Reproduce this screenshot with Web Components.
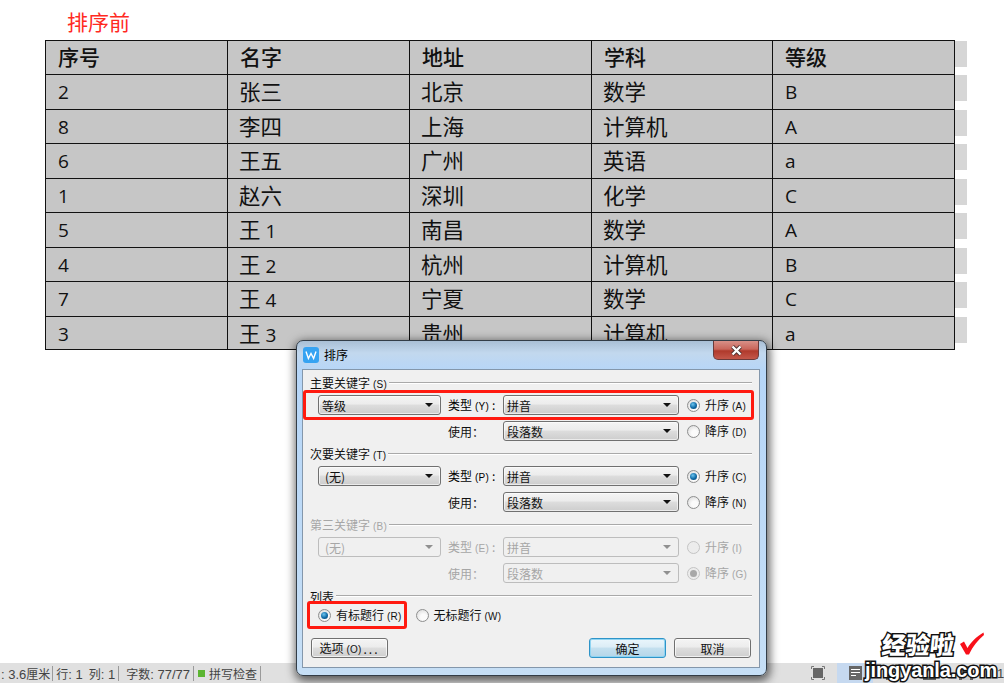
<!DOCTYPE html>
<html lang="zh">
<head>
<meta charset="utf-8">
<title>排序</title>
<style>
  html, body { margin: 0; height: 683px; overflow: hidden; background: #fff; }
  body { font-family: "Noto Sans CJK SC", "Liberation Sans", sans-serif; position: relative; display: flex; flex-direction: column; }
  doc-page { flex: 1; }
</style>
</head>
<body>
<doc-page></doc-page>
<status-bar></status-bar>

<sort-dialog>
  <sort-section legend="主要关键字" key="S" first-keyword="等级" type-key="Y" type-value="拼音" up-key="A" down-key="D" checked="up"></sort-section>
  <sort-section legend="次要关键字" key="T" first-keyword="(无)" type-key="P" type-value="拼音" up-key="C" down-key="N" checked="up"></sort-section>
  <sort-section legend="第三关键字" key="B" first-keyword="(无)" type-key="E" type-value="拼音" up-key="I" down-key="G" checked="down" disabled></sort-section>
</sort-dialog>

<water-mark></water-mark>

<script>
class DocPage extends HTMLElement {
  constructor() {
    super();
    this.attachShadow({ mode: 'open' });
    this.rows = [
      ['序号', '名字', '地址', '学科', '等级'],
      ['2', '张三', '北京', '数学', 'B'],
      ['8', '李四', '上海', '计算机', 'A'],
      ['6', '王五', '广州', '英语', 'a'],
      ['1', '赵六', '深圳', '化学', 'C'],
      ['5', '王 1', '南昌', '数学', 'A'],
      ['4', '王 2', '杭州', '计算机', 'B'],
      ['7', '王 4', '宁夏', '数学', 'C'],
      ['3', '王 3', '贵州', '计算机', 'a']
    ];
  }

  connectedCallback() {
    // chinese runs are set a bit larger than the latin ones, like in the document
    const mark = text => text.replace(/[\u4e00-\u9fff]+/g, m => `<span class="cn">${m}</span>`);
    const rows = this.rows.map((row, i) => `
      <div class="row ${i === 0 ? 'head' : ''}">
        ${row.map(text => `<div class="cell">${mark(text)}</div>`).join('')}
        <div class="stub"></div>
      </div>`).join('');
    this.shadowRoot.innerHTML = `
      <style>
        :host { display: block; }
        .title { height: 40px; padding-left: 67px; color: #ff2a1f; font-size: 21px; line-height: 43px; }
        .table { margin-left: 45px; width: 922px; }
        .row { display: grid; grid-template-columns: 182px 182px 182px 181px 183px 12px; height: 34.44px; }
        .cell {
          box-sizing: border-box;
          background: #c6c6c6;
          border: solid #111;
          border-width: 1px 0 0 1px;
          padding-left: 12px;
          color: #111;
          font: 19px/34px "Open Sans", "Noto Sans CJK SC", sans-serif;
          white-space: nowrap;
          overflow: hidden;
        }
        .cn { font: 21.5px/32px "Noto Sans CJK SC", sans-serif; margin-left: -1px; }
        .row:last-child .cell { border-bottom: 1px solid #111; }
        .cell:nth-child(5) { border-right: 1px solid #111; }
        .head .cell { line-height: 32px; }
        .head .cn { font-size: 21px; font-weight: 500; line-height: 30px; margin-left: 0; }
        .stub { background: #d6d6d6; height: 26px; margin-top: 1px; }
      </style>
      <div class="title">排序前</div>
      <div class="table">${rows}</div>
    `;
  }
}

class KeyLabel extends HTMLElement {
  constructor() {
    super();
    this.attachShadow({ mode: 'open' });
  }

  connectedCallback() {
    const key = this.getAttribute('key');
    this.shadowRoot.innerHTML = `
      <style>
        :host { display: inline-block; font-size: 12px; line-height: 16px; white-space: nowrap; }
        i { font: 10px "Liberation Sans", sans-serif; margin-left: 3px; letter-spacing: 0.2px; }
      </style>
      <slot></slot><i>(${key})</i>${this.hasAttribute('colon') ? '<span style="margin-left:3px">:</span>' : ''}
    `;
  }
}

class ComboBox extends HTMLElement {
  constructor() {
    super();
    this.attachShadow({ mode: 'open' });
  }

  connectedCallback() {
    this.shadowRoot.innerHTML = `
      <style>
        :host {
          display: flex; align-items: center; justify-content: space-between;
          box-sizing: border-box; height: 20px; padding: 0 7px 0 3px;
          border: 1px solid #707070; border-radius: 3px;
          background: linear-gradient(#f4f4f4 0, #ececec 45%, #dddddd 50%, #cdcdcd 100%);
          box-shadow: inset 0 0 0 1px rgba(255,255,255,.6);
          font-size: 12px; color: #111;
        }
        :host([disabled]) { background: #f0f0f0; border-color: #bdbdbd; box-shadow: none; color: #a6a6a6; }
        b { width: 0; height: 0; border: solid transparent; border-width: 4px 4px 0; border-top-color: #111; }
        :host([disabled]) b { border-top-color: #909090; }
      </style>
      <span><slot></slot></span><b></b>
    `;
  }
}

class RadioOption extends HTMLElement {
  constructor() {
    super();
    this.attachShadow({ mode: 'open' });
  }

  connectedCallback() {
    this.shadowRoot.innerHTML = `
      <style>
        :host { display: inline-flex; align-items: center; gap: 5px; font-size: 12px; color: #111; }
        :host([disabled]) { color: #a6a6a6; }
        .dot {
          box-sizing: border-box; width: 13px; height: 13px; border-radius: 50%;
          border: 1px solid #8e8f8f;
          background: radial-gradient(circle at 60% 65%, #fbfbfb 30%, #d4d4d4 100%);
          display: flex; align-items: center; justify-content: center;
        }
        :host([disabled]) .dot { border-color: #c4c4c4; background: #ececec; }
        .dot i { display: none; width: 7px; height: 7px; border-radius: 50%; background: radial-gradient(circle at 40% 35%, #6cc4ee, #0f6aa6 55%, #0a3f68); }
        :host([checked]) .dot i { display: block; }
        :host([checked][disabled]) .dot i { background: #a8a8a8; }
      </style>
      <span class="dot"><i></i></span><slot></slot>
    `;
  }
}

class DialogButton extends HTMLElement {
  constructor() {
    super();
    this.attachShadow({ mode: 'open' });
  }

  connectedCallback() {
    this.shadowRoot.innerHTML = `
      <style>
        :host {
          display: flex; align-items: center; justify-content: center;
          box-sizing: border-box; width: 77px; height: 20px;
          border: 1px solid #707070; border-radius: 3px;
          background: linear-gradient(#f4f4f4 0, #ececec 45%, #dddddd 50%, #cfcfcf 100%);
          box-shadow: inset 0 0 0 1px rgba(255,255,255,.7);
          font-size: 12px; color: #111;
        }
        :host([primary]) {
          border-color: #2e94c8;
          background: linear-gradient(#eaf6fc 0, #dcedf6 45%, #c4e0ef 50%, #b4d6e8 100%);
          box-shadow: inset 0 0 0 1px #8fd4f2;
        }
      </style>
      <slot></slot>
    `;
  }
}

class GroupLegend extends HTMLElement {
  constructor() {
    super();
    this.attachShadow({ mode: 'open' });
  }

  connectedCallback() {
    this.shadowRoot.innerHTML = `
      <style>
        :host { display: flex; align-items: center; height: 18px; padding: 0 7px; color: #111; }
        u { flex: 1; height: 1px; background: #a9a9a9; border-bottom: 1px solid #fff; margin-left: 2px; }
      </style>
      <slot></slot><u></u>
    `;
  }
}

class SortSection extends HTMLElement {
  constructor() {
    super();
    this.attachShadow({ mode: 'open' });
  }

  connectedCallback() {
    const a = name => this.getAttribute(name);
    const off = this.hasAttribute('disabled') ? 'disabled' : '';
    const up = a('checked') === 'up' ? 'checked' : '';
    const down = a('checked') === 'down' ? 'checked' : '';
    const dim = off ? 'color:#a6a6a6' : '';
    const indent = a('first-keyword').startsWith('(') ? 'style="padding-left:6px"' : '';
    this.shadowRoot.innerHTML = `
      <style>
        :host { display: block; height: 71px; }
        .row {
          display: grid; grid-template-columns: 123px 62px 176px auto;
          align-items: center; height: 26px; padding-left: 15px;
        }
        .label { padding-left: 7px; }
        .plain { font-size: 12px; padding-left: 7px; color: #111; }
        radio-option { margin-left: 8px; }
      </style>
      <group-legend style="${dim}"><key-label key="${a('key')}">${a('legend')}</key-label></group-legend>
      <div class="row">
        <combo-box ${off} ${indent}>${a('first-keyword')}</combo-box>
        <key-label class="label" key="${a('type-key')}" colon style="${dim}">类型</key-label>
        <combo-box ${off}>${a('type-value')}</combo-box>
        <radio-option ${up} ${off}><key-label key="${a('up-key')}">升序</key-label></radio-option>
      </div>
      <div class="row">
        <span></span>
        <span class="plain" style="${dim}">使用：</span>
        <combo-box ${off}>段落数</combo-box>
        <radio-option ${down} ${off}><key-label key="${a('down-key')}">降序</key-label></radio-option>
      </div>
    `;
  }
}

class SortDialog extends HTMLElement {
  constructor() {
    super();
    this.attachShadow({ mode: 'open' });
  }

  connectedCallback() {
    this.shadowRoot.innerHTML = `
      <style>
        :host {
          position: absolute; left: 296px; top: 340px; z-index: 2;
          box-sizing: border-box; width: 471px; height: 336px;
          display: flex; flex-direction: column;
          padding: 0 6px 7px 5px;
          border: 1px solid #333d47; border-radius: 7px;
          background: linear-gradient(#a9bfd5 0, #c2d8ee 12px, #b6d6f8 30px, #c6dff6 100%);
          box-shadow: 1px 3px 10px 2px rgba(0,0,0,.6);
        }
        .titlebar { display: flex; align-items: center; box-sizing: border-box; height: 28px; padding: 0 0 1px 1px; flex: none; color: #000; font-size: 12px; gap: 5px; }
        .close {
          margin-left: auto; align-self: flex-start; width: 46px; height: 19px; box-sizing: border-box;
          margin-right: 1px;
          display: flex; align-items: center; justify-content: center;
          border: 1px solid #6b3a3a; border-top: 0; border-radius: 0 0 5px 5px;
          background: linear-gradient(#d89088 0, #c9665b 45%, #b03a2c 55%, #c4574a 100%);
        }
        .panel {
          flex: 1; box-sizing: border-box; border: 1px solid #8497ab;
          background: #f0f0f0; padding-top: 4px; position: relative;
        }
        .list-row { display: flex; align-items: center; gap: 14px; height: 20px; padding-left: 15px; }
        .buttons { display: flex; gap: 8px; margin-top: 13px; padding: 0 8px; }
        .buttons dialog-button:first-child { margin-right: auto; }
        .dots { letter-spacing: 2px; margin-left: 2px; }
        .mark { position: absolute; box-sizing: border-box; border: 3px solid #ff1a10; border-radius: 3px; }
        .mark.a { left: 0; top: 20px; width: 451px; height: 30px; }
        .mark.b { left: 4px; top: 231px; width: 100px; height: 28px; }
      </style>
      <div class="titlebar">
        <svg width="16" height="16" viewBox="0 0 16 16">
          <rect width="16" height="16" rx="3" fill="#36a3f2"/>
          <path d="M3 4.5 5.4 11.5 8 6.5 10.6 11.5 13 4.5" fill="none" stroke="#fff" stroke-width="1.4"/>
        </svg>
        <span>排序</span>
        <div class="close">
          <svg width="13" height="11" viewBox="0 0 13 11">
            <path d="M2.5 1.5 10.5 9.5M10.5 1.5 2.5 9.5" stroke="#4a3030" stroke-width="4"/>
            <path d="M2.5 1.5 10.5 9.5M10.5 1.5 2.5 9.5" stroke="#fff" stroke-width="2.4"/>
          </svg>
        </div>
      </div>
      <div class="panel">
        <slot></slot>
        <group-legend><span style="font-size:12px">列表</span></group-legend>
        <div class="list-row">
          <radio-option checked><key-label key="R">有标题行</key-label></radio-option>
          <radio-option><key-label key="W">无标题行</key-label></radio-option>
        </div>
        <div class="buttons">
          <dialog-button><key-label key="O">选项</key-label><span class="dots">...</span></dialog-button>
          <dialog-button primary>确定</dialog-button>
          <dialog-button>取消</dialog-button>
        </div>
        <div class="mark a"></div>
        <div class="mark b"></div>
      </div>
    `;
  }
}

class StatusBar extends HTMLElement {
  constructor() {
    super();
    this.attachShadow({ mode: 'open' });
  }

  connectedCallback() {
    this.shadowRoot.innerHTML = `
      <style>
        :host {
          display: flex; align-items: center; height: 20px; flex: none;
          background: #e0e0e0; color: #444; font: 13px "Liberation Sans", "Noto Sans CJK SC", sans-serif;
          white-space: nowrap; overflow: hidden;
        }
        b { font: 12px "Noto Sans CJK SC", sans-serif; }
        .left { display: flex; align-items: center; width: 811px; flex: none; }
        .sep { width: 1px; height: 15px; background: #9a9a9a; flex: none; }
        .check { display: inline-block; width: 7px; height: 7px; background: #5cb531; margin: 0 4px 0 4px; }
        .icons { display: flex; align-items: center; height: 20px; }
        .icons svg { display: block; flex: none; }
        .active { background: #c6d9f0; width: 36px; height: 20px; display: flex; align-items: center; justify-content: center; margin: 0 13px 0 12px; }
      </style>
      <div class="left">
        <span style="padding:0 2px 0 1px">: 3.6<b>厘米</b></span><i class="sep"></i>
        <span style="padding-left:3px"><b>行</b>: 1</span><span style="padding:0 3px 0 6px"><b>列</b>: 1</span><i class="sep"></i>
        <span style="padding:0 3px 0 7px"><b>字数</b>: 77/77</span><i class="sep"></i>
        <span style="display:flex;align-items:center;padding-right:3px"><i class="check"></i><b>拼写检查</b></span><i class="sep"></i>
      </div>
      <div class="icons">
        <svg width="14" height="14" viewBox="0 0 14 14">
          <path d="M.5 3V.5H3M11 .5h2.5V3M13.5 11v2.5H11M3 13.5H.5V11" fill="none" stroke="#777"/>
          <rect x="2" y="2" width="10" height="10" fill="#666"/>
        </svg>
        <div class="active">
          <svg width="13" height="14" viewBox="0 0 13 14">
            <rect width="13" height="14" fill="#666"/>
            <path d="M2 3.5h9M2 6.5h9M2 9.5h5" stroke="#fff"/>
          </svg>
        </div>
        <svg width="13" height="14" viewBox="0 0 13 14"><rect width="13" height="14" fill="#666"/><path d="M2 3.5h9M2 6.5h9" stroke="#fff"/></svg>
        <svg style="margin-left:24px" width="13" height="14" viewBox="0 0 13 14"><rect width="13" height="14" fill="#666"/><circle cx="6.5" cy="8" r="3" fill="#ccc"/></svg>
        <svg style="margin-left:23px" width="14" height="14" viewBox="0 0 14 14"><rect width="14" height="14" fill="#666"/><rect x="3" y="8" width="8" height="6" fill="#ccc"/></svg>
        <svg style="margin-left:3px" width="8" height="6" viewBox="0 0 8 6"><path d="M0 0h8L4 6z" fill="#666"/></svg>
        <span style="margin-left:13px">1</span>
      </div>
    `;
  }
}

class WaterMark extends HTMLElement {
  constructor() {
    super();
    this.attachShadow({ mode: 'open' });
  }

  connectedCallback() {
    this.shadowRoot.innerHTML = `
      <style>
        :host { position: absolute; left: 860px; top: 630px; width: 134px; height: 50px; z-index: 3; pointer-events: none; }
        .cn, .en {
          position: absolute; color: #fff; white-space: nowrap;
          -webkit-text-stroke: 3px #111; paint-order: stroke fill;
        }
        .cn { left: 22px; top: 0; font-size: 24px; line-height: 28px; font-weight: 900; transform: skewX(-6deg); }
        .en { left: 5px; top: 29px; font: bold 20px/22px "Liberation Sans", sans-serif; letter-spacing: -0.1px; }
        svg { position: absolute; left: 99px; top: 1px; }
      </style>
      <span class="cn">经验啦</span>
      <svg width="26" height="26" viewBox="0 0 26 26"><path d="M1 13 5 10.5 8.5 17C12 11 17 6 24.5 1.5L25 4C19 9 14 15 10 23.5L7 23.5Z" fill="#f8101a"/></svg>
      <span class="en">jingyanla.com</span>
    `;
  }
}

customElements.define('doc-page', DocPage);
customElements.define('key-label', KeyLabel);
customElements.define('combo-box', ComboBox);
customElements.define('radio-option', RadioOption);
customElements.define('dialog-button', DialogButton);
customElements.define('group-legend', GroupLegend);
customElements.define('sort-section', SortSection);
customElements.define('sort-dialog', SortDialog);
customElements.define('status-bar', StatusBar);
customElements.define('water-mark', WaterMark);
</script>
</body>
</html>
